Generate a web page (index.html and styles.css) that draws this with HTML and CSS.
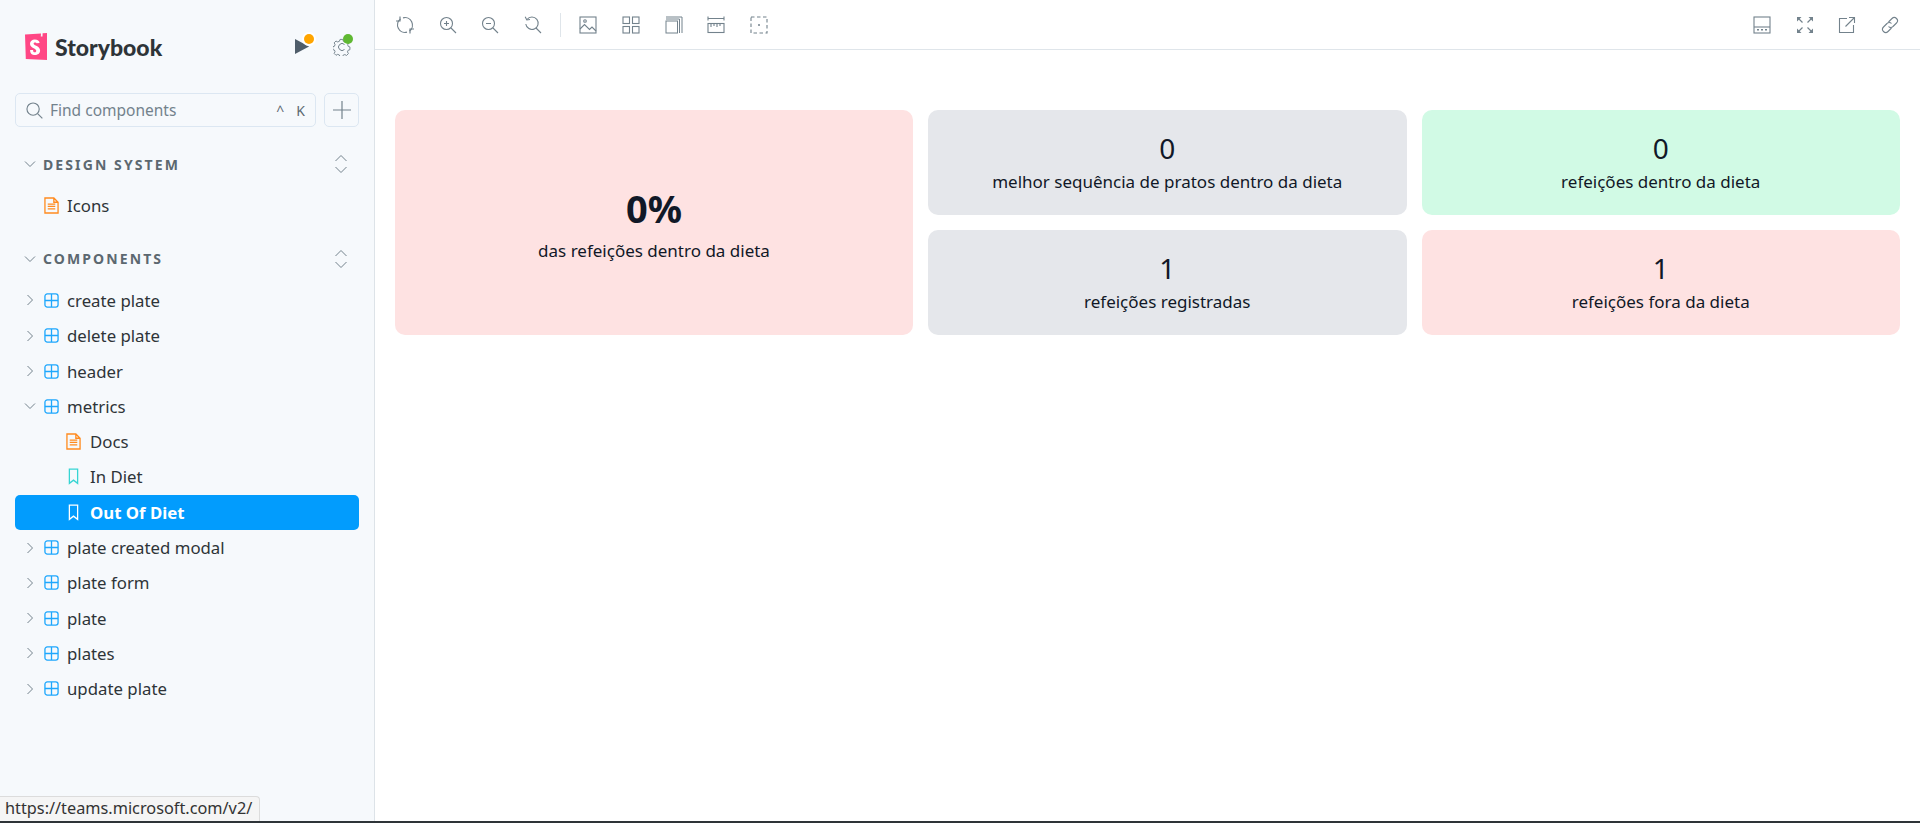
FILE: index.html
```html
<!DOCTYPE html>
<html lang="pt-BR">
<head>
    <meta charset="UTF-8">
    <title>Storybook</title>
    <link rel="stylesheet" href="styles.css">
</head>
<body>
    <svg class="sprites" width="0" height="0">
        <symbol id="i-chevron-right" viewBox="0 0 12 12"><path d="M3.500 1 8.500 6 3.500 11" fill="none" stroke="currentColor" stroke-width="1"/></symbol>
        <symbol id="i-chevron-down" viewBox="0 0 12 12"><path d="M1 3.500 6 8.500 11 3.500" fill="none" stroke="currentColor" stroke-width="1"/></symbol>
        <symbol id="i-expand" viewBox="0 0 14 20"><path d="M1.500 7 7 1.500 12.500 7M1.500 13 7 18.500 12.500 13" fill="none" stroke="currentColor" stroke-width="1"/></symbol>
        <symbol id="i-doc" viewBox="0 0 16 18"><path d="M1 1h9.500L15 5.500V17H1zM10.500 1v4.500H15" fill="none" stroke="#ff8b1f" stroke-width="1.400"/><path d="M4 7.500h8M4 10h8M4 12.500h8" stroke="#ff8b1f" stroke-width="1.300"/></symbol>
        <symbol id="i-comp" viewBox="0 0 16 16"><rect x="1" y="1" width="14" height="14" rx="2.500" fill="none" stroke="#1ea7fd" stroke-width="1.400"/><path d="M8 1v14M1 8h14" stroke="#1ea7fd" stroke-width="1.400"/></symbol>
        <symbol id="i-bookmark" viewBox="0 0 12 18"><path d="M1.500 1h9v15.500L6 13l-4.500 3.500z" fill="none" stroke="currentColor" stroke-width="1.400"/></symbol>

        <symbol id="t-sync" viewBox="0 0 18 18"><g fill="none" stroke="currentColor" stroke-width="1.200"><path d="M7 1.800A7.500 7.500 0 0 1 13.500 15M11 16.200A7.500 7.500 0 0 1 4.500 3"/><path d="M4 .5V5H-.5M14 17.500V13h4.500"/></g></symbol>
        <symbol id="t-zoom-in" viewBox="0 0 18 18"><g fill="none" stroke="currentColor" stroke-width="1.100"><circle cx="7.500" cy="7.500" r="6"/><path d="m12 12 5 5M7.500 5v5M5 7.500h5"/></g></symbol>
        <symbol id="t-zoom-out" viewBox="0 0 18 18"><g fill="none" stroke="currentColor" stroke-width="1.100"><circle cx="7.500" cy="7.500" r="6"/><path d="m12 12 5 5M5 7.500h5"/></g></symbol>
        <symbol id="t-zoom-reset" viewBox="0 0 18 18"><g fill="none" stroke="currentColor" stroke-width="1.100"><path d="M3 3.500A6.200 6.200 0 1 1 1.800 8"/><path d="m12 12 5 5M1.200 .8 2.800 4l3.200-.5"/></g></symbol>
        <symbol id="t-image" viewBox="0 0 18 18"><g fill="none" stroke="currentColor" stroke-width="1.100"><rect x="1" y="1" width="16" height="16"/><path d="m1 13 4.500-4.500 5 5 2.500-2.500 4 4"/><circle cx="6" cy="5" r="1.300"/></g></symbol>
        <symbol id="t-grid" viewBox="0 0 18 18"><g fill="none" stroke="currentColor" stroke-width="1.100"><rect x="1" y="1" width="6.500" height="6.500"/><rect x="10.500" y="1" width="6.500" height="6.500"/><rect x="1" y="10.500" width="6.500" height="6.500"/><rect x="10.500" y="10.500" width="6.500" height="6.500"/></g></symbol>
        <symbol id="t-outline" viewBox="0 0 18 18"><g fill="none" stroke="currentColor" stroke-width="1"><rect x="1" y="5" width="11.500" height="12"/><path d="M1 3h13.500v14M1 1h16v16"/></g></symbol>
        <symbol id="t-ruler" viewBox="0 0 18 18"><g fill="none" stroke="currentColor" stroke-width="1.100"><path d="M1 2.500h16M1 .5v4M17 .5v4"/><rect x="1" y="7.500" width="16" height="9"/><path d="M4 7.500V11M7 7.500V10M10 7.500V11M13 7.500V10"/></g></symbol>
        <symbol id="t-focus" viewBox="0 0 18 18"><rect x="1" y="1" width="16" height="16" fill="none" stroke="currentColor" stroke-width="1.100" stroke-dasharray="3.500 2.500"/><circle cx="9" cy="9" r="1" fill="currentColor"/></symbol>
        <symbol id="t-panel" viewBox="0 0 18 18"><g fill="none" stroke="currentColor" stroke-width="1.100"><rect x="1" y="1" width="16" height="16"/><path d="M1 11h16"/></g><path d="M4 13h2v1.500H4zM8 13h2v1.500H8zM12 13h2v1.500h-2z" fill="currentColor"/></symbol>
        <symbol id="t-full" viewBox="0 0 18 18"><g fill="none" stroke="currentColor" stroke-width="1.200"><path d="M1.500 1.500 6.500 6.500M16.500 1.500l-5 5M1.500 16.500l5-5M16.500 16.500l-5-5"/></g><path d="M1 1h4.500L1 5.500zM17 1h-4.500L17 5.500zM1 17h4.500L1 12.500zM17 17h-4.500l4.500-4.500z" fill="currentColor"/></symbol>
        <symbol id="t-share" viewBox="0 0 18 18"><g fill="none" stroke="currentColor" stroke-width="1.100"><path d="M9 2.500H1.500v14h14V9"/><path d="m7.500 10.500 9-9M11 1.500h5.500V7"/></g></symbol>
        <symbol id="t-link" viewBox="0 0 18 18"><g fill="none" stroke="currentColor" stroke-width="1.100"><path d="M7.500 6 11 2.500a3 3 0 0 1 4.500 4.500l-3.500 3.500a3 3 0 0 1-4.500 0"/><path d="M10.500 12 7 15.500A3 3 0 0 1 2.500 11L6 7.500a3 3 0 0 1 4.500 0"/></g></symbol>
    </svg>

    <div class="app">
        <aside class="sidebar">
            <div class="brand-row">
                <div class="brand">
                    <svg class="logo" viewBox="0 0 22 27">
                        <path d="M0 1.500 16 .5 15.800 3.500 17.500 3.400 17.600 .3 22 0V27L.8 26z" fill="#ff4785"/>
                        <path d="M11.500 10.200c0-1-2.900-1.200-2.900.3 0 2.500 6.500 2.100 6.500 7 0 3-2.500 4.500-5.100 4.500-2.800 0-5-1.300-4.900-5l3-.1c0 1.900.4 2.300 1.700 2.300 1.100 0 1.500-.6 1.500-1.500 0-2.500-6.300-2.600-6.300-7 0-2.700 2.100-4.300 4.800-4.300 2.800 0 4.700 1.300 4.800 3.700z" fill="#fff"/>
                    </svg>
                    <span class="brand-name">Storybook</span>
                </div>
                <div class="brand-tools">
                    <span class="status-btn">
                        <svg class="play" viewBox="0 0 16 16"><path d="M0 0 15 8 0 16z" fill="#4f5d6a"/></svg>
                        <span class="dot dot-orange"></span>
                    </span>
                    <span class="status-btn">
                        <svg class="gear" viewBox="0 0 18 18"><g fill="none" stroke="#73828c" stroke-width="1"><path d="M7.500 1.500h3l.5 2 1.800.8 1.800-1 2 2.100-1 1.800.7 1.800 1.700.5v3l-1.900.5-.7 1.800 1 1.800-2 2-1.800-1-1.800.7-.5 1.700h-3l-.5-1.900-1.800-.7-1.800 1-2-2 1-1.800-.7-1.800-1.800-.5v-3l1.800-.5.7-1.800-1-1.800 2-2 1.800 1 1.800-.7z" transform="scale(.94)"/><path d="M11.500 6.500a3.500 3.500 0 1 0 0 5"/></g></svg>
                        <span class="dot dot-green"></span>
                    </span>
                </div>
            </div>

            <div class="search-row">
                <div class="search-box">
                    <svg class="search-icon" viewBox="0 0 18 18"><g fill="none" stroke="#73828c" stroke-width="1.200"><circle cx="7.500" cy="7.500" r="6.500"/><path d="m12.300 12.300 5 5"/></g></svg>
                    <span class="search-text">Find components</span>
                    <span class="search-key">^</span>
                    <span class="search-key">K</span>
                </div>
                <button class="add-btn"><svg viewBox="0 0 18 18"><path d="M9 0v18M0 9h18" stroke="#73828c" stroke-width="1.200"/></svg></button>
            </div>

            <div class="section section-first">
                <svg class="chev"><use href="#i-chevron-down"/></svg>
                <span class="section-title">DESIGN SYSTEM</span>
                <svg class="expand"><use href="#i-expand"/></svg>
            </div>
            <ul class="tree">
                <li class="node"><span class="chev-slot"></span><svg class="ic-doc"><use href="#i-doc"/></svg>Icons</li>
            </ul>

            <div class="section">
                <svg class="chev"><use href="#i-chevron-down"/></svg>
                <span class="section-title">COMPONENTS</span>
                <svg class="expand"><use href="#i-expand"/></svg>
            </div>
            <ul class="tree">
                <li class="node"><svg class="chev"><use href="#i-chevron-right"/></svg><svg class="ic-comp"><use href="#i-comp"/></svg>create plate</li>
                <li class="node"><svg class="chev"><use href="#i-chevron-right"/></svg><svg class="ic-comp"><use href="#i-comp"/></svg>delete plate</li>
                <li class="node"><svg class="chev"><use href="#i-chevron-right"/></svg><svg class="ic-comp"><use href="#i-comp"/></svg>header</li>
                <li class="node"><svg class="chev"><use href="#i-chevron-down"/></svg><svg class="ic-comp"><use href="#i-comp"/></svg>metrics</li>
                <li class="node child"><svg class="ic-doc"><use href="#i-doc"/></svg>Docs</li>
                <li class="node child"><svg class="ic-story"><use href="#i-bookmark"/></svg>In Diet</li>
                <li class="node child selected"><svg class="ic-story"><use href="#i-bookmark"/></svg>Out Of Diet</li>
                <li class="node"><svg class="chev"><use href="#i-chevron-right"/></svg><svg class="ic-comp"><use href="#i-comp"/></svg>plate created modal</li>
                <li class="node"><svg class="chev"><use href="#i-chevron-right"/></svg><svg class="ic-comp"><use href="#i-comp"/></svg>plate form</li>
                <li class="node"><svg class="chev"><use href="#i-chevron-right"/></svg><svg class="ic-comp"><use href="#i-comp"/></svg>plate</li>
                <li class="node"><svg class="chev"><use href="#i-chevron-right"/></svg><svg class="ic-comp"><use href="#i-comp"/></svg>plates</li>
                <li class="node"><svg class="chev"><use href="#i-chevron-right"/></svg><svg class="ic-comp"><use href="#i-comp"/></svg>update plate</li>
            </ul>
        </aside>

        <main class="main">
            <div class="toolbar">
                <svg class="tool"><use href="#t-sync"/></svg>
                <svg class="tool"><use href="#t-zoom-in"/></svg>
                <svg class="tool"><use href="#t-zoom-out"/></svg>
                <svg class="tool"><use href="#t-zoom-reset"/></svg>
                <span class="tool-sep"></span>
                <svg class="tool"><use href="#t-image"/></svg>
                <svg class="tool"><use href="#t-grid"/></svg>
                <svg class="tool"><use href="#t-outline"/></svg>
                <svg class="tool"><use href="#t-ruler"/></svg>
                <svg class="tool"><use href="#t-focus"/></svg>
                <span class="tool-space"></span>
                <svg class="tool"><use href="#t-panel"/></svg>
                <svg class="tool"><use href="#t-full"/></svg>
                <svg class="tool"><use href="#t-share"/></svg>
                <svg class="tool"><use href="#t-link"/></svg>
            </div>

            <div class="canvas">
                <div class="metrics">
                    <div class="card card-main red">
                        <strong class="percent">0%</strong>
                        <span class="label">das refeições dentro da dieta</span>
                    </div>
                    <div class="card gray">
                        <span class="value">0</span>
                        <span class="label">melhor sequência de pratos dentro da dieta</span>
                    </div>
                    <div class="card green">
                        <span class="value">0</span>
                        <span class="label">refeições dentro da dieta</span>
                    </div>
                    <div class="card gray">
                        <span class="value">1</span>
                        <span class="label">refeições registradas</span>
                    </div>
                    <div class="card red">
                        <span class="value">1</span>
                        <span class="label">refeições fora da dieta</span>
                    </div>
                </div>
            </div>
        </main>
    </div>

    <div class="url-tip">https://teams.microsoft.com/v2/</div>
</body>
</html>
```

FILE: styles.css
```css
* {
    box-sizing: border-box;
}

html, body {
    height: 100%;
}

body {
    margin: 0;
    overflow: hidden;
    background-color: #ffffff;
    font-family: "Noto Sans", Arial, sans-serif;
    border-bottom: 2px solid #2e3438;
}

.sprites {
    position: absolute;
}

.app {
    display: flex;
    height: 100%;
}

/* Sidebar */
.sidebar {
    width: 375px;
    flex-shrink: 0;
    padding: 0 15px;
    background-color: #f6f9fc;
    border-right: 1px solid #dde3e8;
    color: #2e3438;
}

.brand-row {
    display: flex;
    align-items: center;
    justify-content: space-between;
    height: 93px;
    padding: 0 8px 0 10px;
}

.brand {
    display: flex;
    align-items: center;
    gap: 8px;
}

.logo {
    width: 22px;
    height: 27px;
}

.brand-name {
    font-family: Lato, sans-serif;
    font-size: 23px;
    font-weight: 900;
    color: #2e3438;
}

.brand-tools {
    display: flex;
    align-items: center;
    gap: 20px;
}

.status-btn {
    position: relative;
    display: flex;
    width: 18px;
    height: 18px;
}

.play {
    width: 15px;
    height: 17px;
}

.gear {
    width: 18px;
    height: 18px;
}

.dot {
    position: absolute;
    top: -4px;
    width: 10px;
    height: 10px;
    border-radius: 50%;
}

.dot-orange {
    right: -1px;
    background-color: #ffa500;
    box-shadow: 0 0 0 2px #ffffff;
}

.dot-green {
    right: -2px;
    background-color: #5fb832;
}

.search-row {
    display: flex;
    gap: 8px;
    height: 34px;
}

.search-box {
    flex: 1;
    display: flex;
    align-items: center;
    padding: 0 10px;
    border: 1px solid #dce7f2;
    border-radius: 5px;
    font-size: 15.500px;
    color: #73828c;
}

.search-icon {
    width: 17px;
    height: 17px;
    margin-right: 7px;
}

.search-text {
    flex: 1;
}

.search-key {
    margin-left: 12px;
    font-size: 14px;
    color: #5c6870;
}

.add-btn {
    width: 35px;
    padding: 0;
    display: flex;
    align-items: center;
    justify-content: center;
    background: none;
    border: 1px solid #dce7f2;
    border-radius: 5px;
}

.add-btn svg {
    width: 18px;
    height: 18px;
}

.section {
    display: flex;
    align-items: center;
    height: 30px;
    margin-top: 20.500px;
    padding: 0 11px 0 9px;
}

.section-first {
    margin-top: 22px;
}

.section-title {
    flex: 1;
    margin-left: 7px;
    font-size: 14px;
    font-weight: 700;
    letter-spacing: 2.100px;
    color: #5c6870;
}

.chev {
    width: 12px;
    height: 12px;
    flex-shrink: 0;
    color: #73828c;
}

.expand {
    width: 14px;
    height: 20px;
    color: #73828c;
}

.tree {
    list-style: none;
    margin: 9px 0 0 0;
    padding: 0;
}

.node {
    display: flex;
    align-items: center;
    height: 35.300px;
    padding-left: 9px;
    font-size: 16.800px;
    color: #2e3438;
    white-space: nowrap;
}

.chev-slot {
    width: 12px;
}

.ic-comp {
    width: 15px;
    height: 15px;
    margin: 0 8px 0 8px;
}

.ic-doc {
    width: 15px;
    height: 17px;
    margin: 0 8px 0 8px;
}

.ic-story {
    width: 11px;
    height: 17px;
    margin: 0 11px 0 9px;
    color: #37d5d3;
}

.child {
    padding-left: 44px;
}

.child .ic-doc {
    margin: 0 9px 0 7px;
}

.selected {
    background-color: #029cfd;
    border-radius: 5px;
    color: #ffffff;
    font-weight: 700;
}

.selected .ic-story {
    color: #ffffff;
}

/* Toolbar */
.main {
    flex: 1;
    min-width: 0;
}

.toolbar {
    display: flex;
    align-items: center;
    height: 50px;
    padding: 0 21px;
    border-bottom: 1px solid #dfe5ea;
    color: #73828c;
}

.tool {
    width: 18px;
    height: 18px;
    margin-right: 24.600px;
    overflow: visible;
}

.tool:last-child {
    margin-right: 0;
}

.tool-sep {
    width: 1px;
    height: 24px;
    margin: 0 18px 0 -6px;
    background-color: #dfe5ea;
}

.tool-space {
    flex: 1;
}

/* Metrics */
.canvas {
    padding: 60px 20px 0 20px;
}

.metrics {
    display: grid;
    grid-template-columns: 518px 1fr 1fr;
    grid-template-rows: 105px 105px;
    gap: 15px;
}

.card {
    display: flex;
    flex-direction: column;
    align-items: center;
    justify-content: center;
    border-radius: 10px;
    color: #111827;
}

.card-main {
    grid-row: span 2;
    padding-top: 5px;
}

.red {
    background-color: #fee2e2;
}

.gray {
    background-color: #e5e7eb;
}

.green {
    background-color: #d1fae5;
}

.percent {
    margin-bottom: 8px;
    font-size: 38px;
    line-height: 44px;
    font-weight: 700;
}

.value {
    margin-bottom: 3px;
    font-size: 28px;
    line-height: 36px;
}

.label {
    font-size: 17px;
    line-height: 26px;
}

/* Status bar link tooltip */
.url-tip {
    position: absolute;
    left: 0;
    bottom: 2px;
    height: 25px;
    width: 260px;
    padding: 0 0 0 5px;
    background-color: #f5f5f5;
    border: 1px solid #dcdcdc;
    border-left: none;
    border-bottom: none;
    border-radius: 0 4px 0 0;
    font-family: "Noto Sans", sans-serif;
    font-size: 16.300px;
    color: #333333;
    white-space: nowrap;
}
```
